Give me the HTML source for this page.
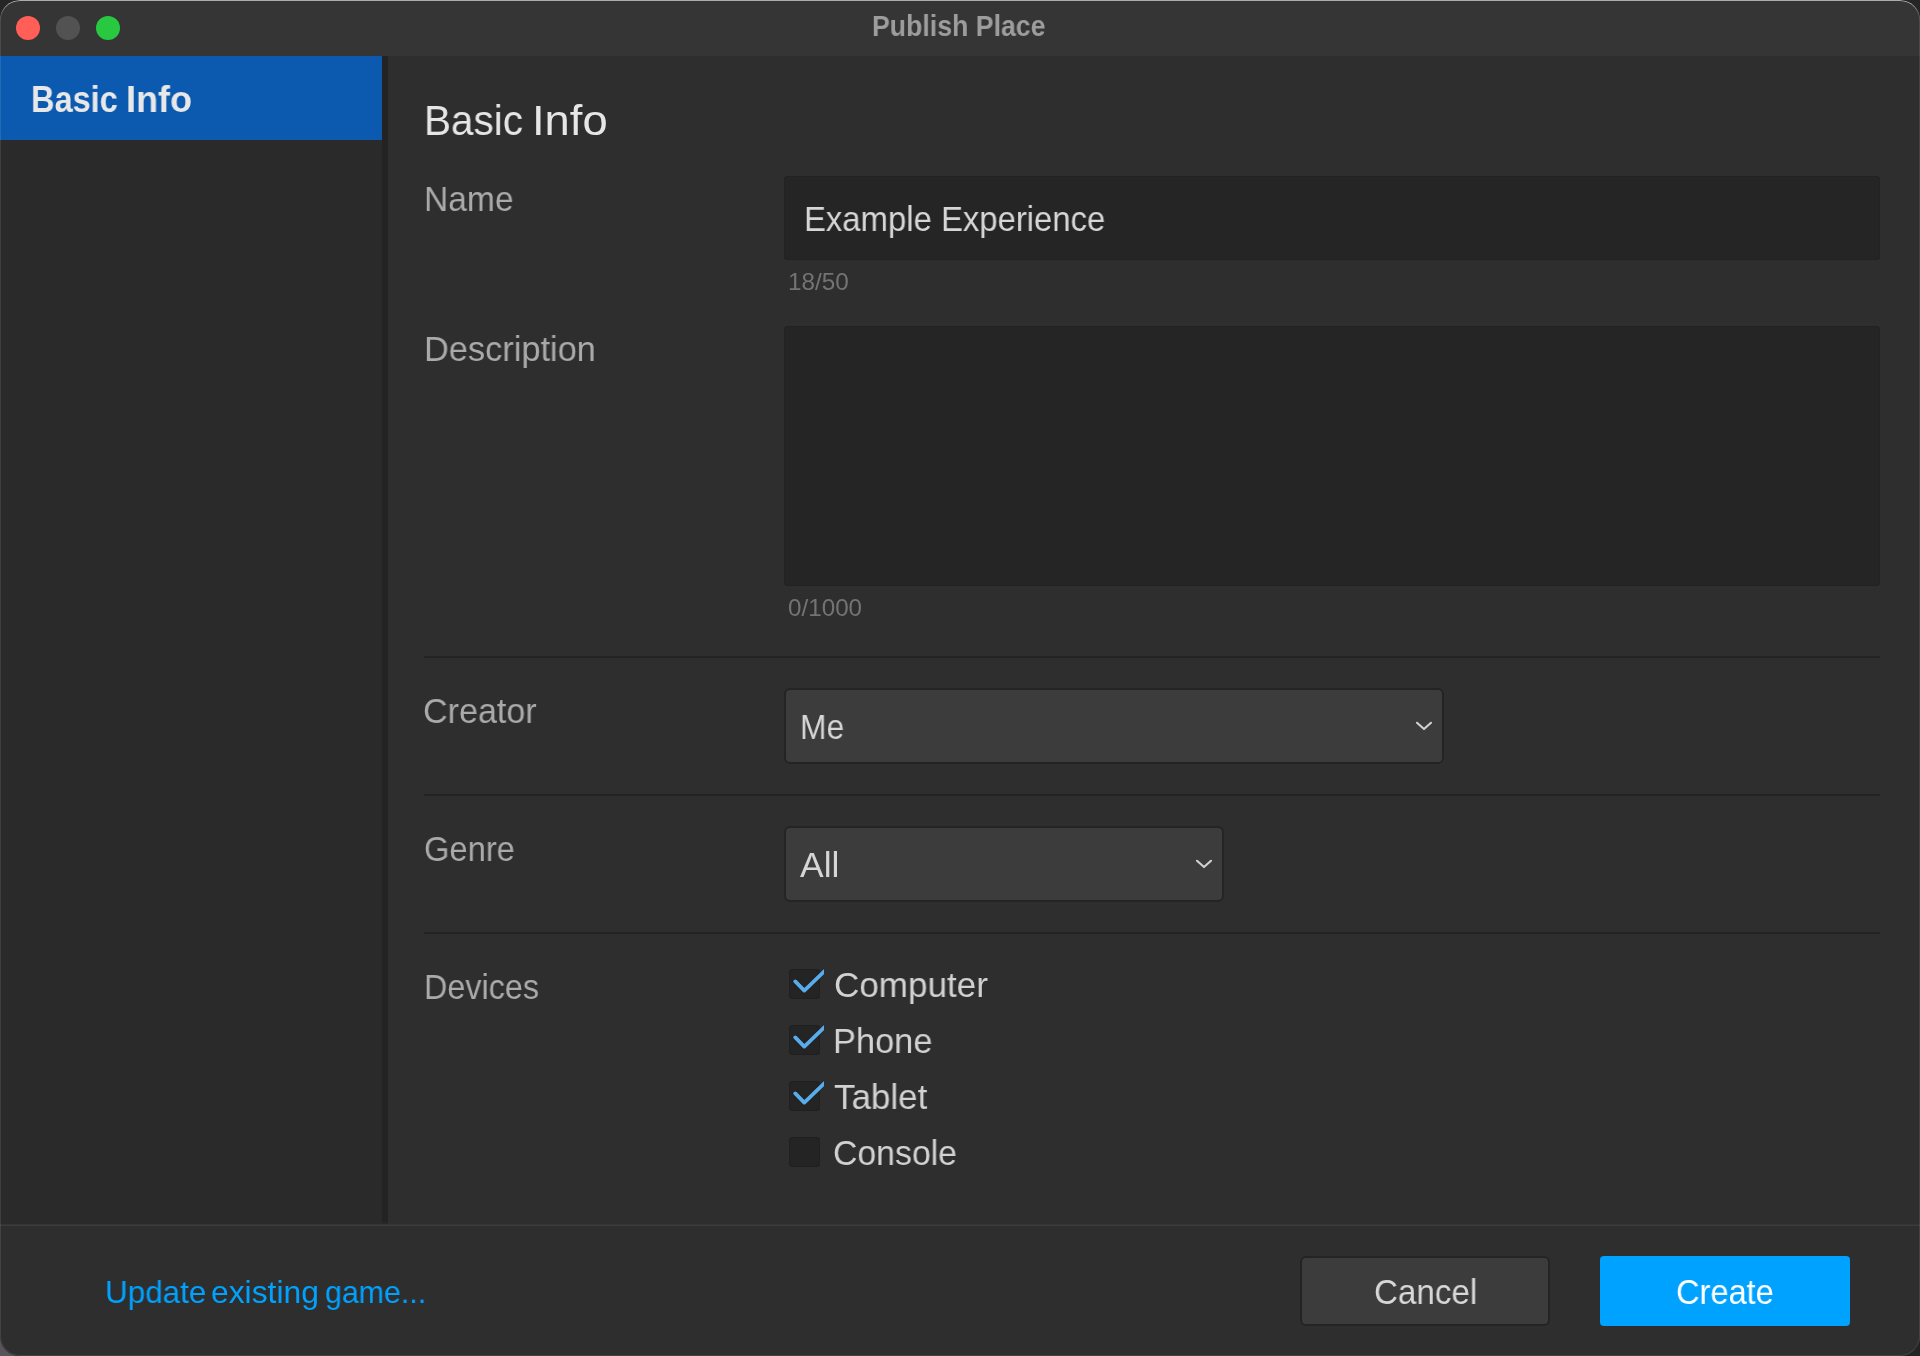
<!DOCTYPE html>
<html><head><meta charset="utf-8"><title>Publish Place</title><style>
html,body{margin:0;padding:0;width:1920px;height:1356px;overflow:hidden;background:#262626}
#win{position:absolute;left:0;top:0;width:1920px;height:1356px;border-radius:20px;overflow:hidden;background:#2e2e2e}
.r{position:absolute}
.t{position:absolute;font-family:"Liberation Sans",sans-serif;white-space:pre;transform-origin:0 0;will-change:transform}
.cb{position:absolute;left:789px;width:31px;height:30px;border-radius:4px;background:#242424;box-shadow:inset 0 0 0 1px #202020}
#edge{position:absolute;left:0;top:0;width:1920px;height:1356px;border-radius:20px;box-shadow:inset 0 1px 0 rgba(255,255,255,0.55),inset 0 0 0 1px rgba(255,255,255,0.1)}
</style></head><body>
<div class="r" style="left:0;top:1316px;width:40px;height:40px;background:#58545a"></div>
<div class="r" style="left:1880px;top:1316px;width:40px;height:40px;background:#232323"></div>
<div id="win">
 <div class="r" style="left:0;top:0;width:1920px;height:56px;background:#353535"></div>
 <div class="r" style="left:0;top:56px;width:382px;height:1169px;background:#2a2a2a"></div>
 <div class="r" style="left:0;top:56px;width:382px;height:84px;background:#0c5ab0"></div>
 <div class="r" style="left:382px;top:56px;width:6px;height:1166px;background:#232323"></div><div class="r" style="left:382px;top:1222px;width:6px;height:2px;background:#282828"></div>
 <div class="r" style="left:388px;top:56px;width:1532px;height:1169px;background:#2e2e2e"></div>
 <div class="r" style="left:0;top:1224px;width:1920px;height:1px;background:#353535"></div>
 <div class="r" style="left:0;top:1225px;width:1920px;height:1px;background:#3c3c3c"></div>
 <div class="r" style="left:0;top:1226px;width:1920px;height:130px;background:#2e2e2e"></div>
 <div class="r" style="left:16px;top:16px;width:24px;height:24px;border-radius:50%;background:#ff5f57"></div>
 <div class="r" style="left:56px;top:16px;width:24px;height:24px;border-radius:50%;background:#525252"></div>
 <div class="r" style="left:96px;top:16px;width:24px;height:24px;border-radius:50%;background:#28c840"></div>
 <div class="r" style="left:784px;top:176px;width:1096px;height:84px;border-radius:4px;background:#252525;box-shadow:inset 0 0 0 1px #222"></div>
 <div class="r" style="left:784px;top:326px;width:1096px;height:260px;border-radius:4px;background:#252525;box-shadow:inset 0 0 0 1px #222"></div>
 <div class="r" style="left:424px;top:656px;width:1456px;height:2px;background:#232323"></div>
 <div class="r" style="left:424px;top:794px;width:1456px;height:2px;background:#232323"></div>
 <div class="r" style="left:424px;top:932px;width:1456px;height:2px;background:#232323"></div>
 <div class="r" style="left:784px;top:688px;width:656px;height:72px;border:2px solid #242424;border-radius:6px;background:#3c3c3c"></div>
 <svg class="r" style="left:1414px;top:716px" width="20" height="18"><polyline points="3,6.8 10,13 17,6.8" fill="none" stroke="#d0d0d0" stroke-width="2.2" stroke-linecap="round" stroke-linejoin="round"/></svg>
 <div class="r" style="left:784px;top:826px;width:436px;height:72px;border:2px solid #242424;border-radius:6px;background:#3c3c3c"></div>
 <svg class="r" style="left:1194px;top:854px" width="20" height="18"><polyline points="3,6.8 10,13 17,6.8" fill="none" stroke="#d0d0d0" stroke-width="2.2" stroke-linecap="round" stroke-linejoin="round"/></svg>
 <div class="cb" style="top:969px"></div><svg class="r" style="left:786px;top:963px" width="38.2" height="36" viewBox="786 963 38.2 36"><polyline points="795.3,981.4 804.3,990.6 826,969.6" fill="none" stroke="#1c1c1c" stroke-opacity="0.5" stroke-width="5.2" stroke-linecap="round" stroke-linejoin="round"/><polyline points="795.3,981.4 804.3,990.6 826,969.6" fill="none" stroke="#58acea" stroke-width="3.8" stroke-linecap="round" stroke-linejoin="round"/></svg><div class="cb" style="top:1025px"></div><svg class="r" style="left:786px;top:1019px" width="38.2" height="36" viewBox="786 1019 38.2 36"><polyline points="795.3,1037.4 804.3,1046.6 826,1025.6" fill="none" stroke="#1c1c1c" stroke-opacity="0.5" stroke-width="5.2" stroke-linecap="round" stroke-linejoin="round"/><polyline points="795.3,1037.4 804.3,1046.6 826,1025.6" fill="none" stroke="#58acea" stroke-width="3.8" stroke-linecap="round" stroke-linejoin="round"/></svg><div class="cb" style="top:1081px"></div><svg class="r" style="left:786px;top:1075px" width="38.2" height="36" viewBox="786 1075 38.2 36"><polyline points="795.3,1093.4 804.3,1102.6 826,1081.6" fill="none" stroke="#1c1c1c" stroke-opacity="0.5" stroke-width="5.2" stroke-linecap="round" stroke-linejoin="round"/><polyline points="795.3,1093.4 804.3,1102.6 826,1081.6" fill="none" stroke="#58acea" stroke-width="3.8" stroke-linecap="round" stroke-linejoin="round"/></svg><div class="cb" style="top:1137px"></div>
 <div class="r" style="left:1300px;top:1256px;width:246px;height:66px;border:2px solid #242424;border-radius:6px;background:#3c3c3c"></div>
 <div class="r" style="left:1600px;top:1256px;width:250px;height:70px;border-radius:4px;background:#00a2ff"></div>
 <div class="t" style="left:871.84px;top:12px;font-size:29px;line-height:29px;color:#9d9d9d;font-weight:bold;transform:scaleX(0.9198)">Publish Place</div><div class="t" style="left:30.73px;top:82px;font-size:36.6px;line-height:36.6px;color:#e8e8e8;font-weight:bold;transform:scaleX(0.8891)">Basic</div><div class="t" style="left:126.30px;top:82px;font-size:36.6px;line-height:36.6px;color:#e8e8e8;font-weight:bold;transform:scaleX(0.9840)">Info</div><div class="t" style="left:424.41px;top:100px;font-size:42.5px;line-height:42.5px;color:#e6e6e6;transform:scaleX(0.9522)">Basic</div><div class="t" style="left:532.06px;top:100px;font-size:42.5px;line-height:42.5px;color:#e6e6e6;transform:scaleX(1.0662)">Info</div><div class="t" style="left:423.78px;top:181px;font-size:35px;line-height:35px;color:#aaaaaa;transform:scaleX(0.9588)">Name</div><div class="t" style="left:423.71px;top:331px;font-size:35px;line-height:35px;color:#aaaaaa;transform:scaleX(0.9815)">Description</div><div class="t" style="left:423.41px;top:693px;font-size:35px;line-height:35px;color:#aaaaaa;transform:scaleX(0.9744)">Creator</div><div class="t" style="left:423.51px;top:831px;font-size:35px;line-height:35px;color:#aaaaaa;transform:scaleX(0.9336)">Genre</div><div class="t" style="left:423.88px;top:969px;font-size:35px;line-height:35px;color:#aaaaaa;transform:scaleX(0.9241)">Devices</div><div class="t" style="left:803.84px;top:201px;font-size:35px;line-height:35px;color:#d6d6d6;transform:scaleX(0.9386)">Example Experience</div><div class="t" style="left:787.83px;top:270px;font-size:24px;line-height:24px;color:#737373;transform:scaleX(1.0141)">18/50</div><div class="t" style="left:787.81px;top:596px;font-size:24px;line-height:24px;color:#737373;transform:scaleX(1.0091)">0/1000</div><div class="t" style="left:799.96px;top:709px;font-size:35.3px;line-height:35.3px;color:#d6d6d6;transform:scaleX(0.9005)">Me</div><div class="t" style="left:799.62px;top:847px;font-size:35.3px;line-height:35.3px;color:#d6d6d6;transform:scaleX(1.0039)">All</div><div class="t" style="left:833.67px;top:967px;font-size:35.3px;line-height:35.3px;color:#d2d2d2;transform:scaleX(0.9932)">Computer</div><div class="t" style="left:833.03px;top:1023px;font-size:35.3px;line-height:35.3px;color:#d2d2d2;transform:scaleX(0.9740)">Phone</div><div class="t" style="left:833.88px;top:1079px;font-size:35.3px;line-height:35.3px;color:#d2d2d2;transform:scaleX(0.9900)">Tablet</div><div class="t" style="left:833.45px;top:1135px;font-size:35.3px;line-height:35.3px;color:#d2d2d2;transform:scaleX(0.9577)">Console</div><div class="t" style="left:1373.67px;top:1274px;font-size:35px;line-height:35px;color:#d8d8d8;transform:scaleX(0.9471)">Cancel</div><div class="t" style="left:1676.00px;top:1274px;font-size:35px;line-height:35px;color:#ffffff;transform:scaleX(0.9311)">Create</div><div class="t" style="left:104.59px;top:1277px;font-size:31.8px;line-height:31.8px;color:#00a2ff;transform:scaleX(0.9887)">Update</div><div class="t" style="left:211.35px;top:1277px;font-size:31.8px;line-height:31.8px;color:#00a2ff;transform:scaleX(0.9978)">existing</div><div class="t" style="left:324.53px;top:1277px;font-size:31.8px;line-height:31.8px;color:#00a2ff;transform:scaleX(0.9546)">game...</div>
 <div id="edge"></div>
</div>
</body></html>
